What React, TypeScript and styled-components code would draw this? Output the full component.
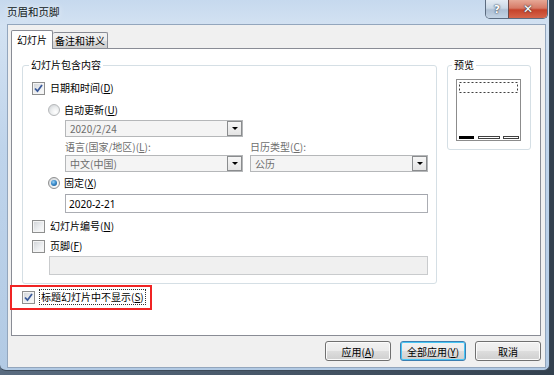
import React from 'react';
import styled, { createGlobalStyle } from 'styled-components';

const GlobalStyle = createGlobalStyle`
  html, body {
    margin: 0;
    padding: 0;
  }
  body {
    width: 554px;
    height: 375px;
    overflow: hidden;
    background: linear-gradient(90deg, #5a6c80 0%, #33414f 100%);
    font-family: "Noto Sans CJK SC", "Noto Sans", sans-serif;
    font-size: 10px;
    color: #000;
  }
`;

const Window = styled.div`
  position: relative;
  box-sizing: border-box;
  width: 550px;
  height: 371px;
  padding: 0 3px 2px 7px;
  display: flex;
  flex-direction: column;
  border-right: 1px solid #3d4a58;
  border-bottom: 1px solid #3d4a58;
  border-radius: 0 0 6px 6px;
  background: linear-gradient(180deg, #c6d9ee 0%, #d3e2f2 7%, #bfd4eb 40%, #b2cae4 100%);
`;

const TitleBar = styled.div`
  height: 24px;
  display: flex;
  align-items: flex-start;
  flex-shrink: 0;
`;

const Title = styled.div`
  padding-top: 4px;
  line-height: 16px;
  font-size: 10.5px;
  color: #101820;
  text-shadow: 0 0 6px rgba(255, 255, 255, 0.9);
`;

const Caption = styled.div`
  margin-left: auto;
  margin-right: -2px;
  display: flex;
  height: 18px;
  border: 1px solid #5c6c80;
  border-top: none;
  border-radius: 0 0 5px 5px;
  overflow: hidden;
`;

const CaptionButton = styled.div<{ $close?: boolean }>`
  width: ${(p) => (p.$close ? 38 : 22)}px;
  display: flex;
  align-items: center;
  justify-content: center;
  font-family: "DejaVu Sans", sans-serif;
  font-weight: bold;
  font-size: ${(p) => (p.$close ? 12 : 11)}px;
  color: #fff;
  text-shadow: 0 0 2px #2c3a4c, 0 0 1px #2c3a4c;
  background: ${(p) =>
    p.$close
      ? 'linear-gradient(180deg, #e6a896 0%, #d67a66 45%, #c5432b 55%, #d6654a 100%)'
      : 'linear-gradient(180deg, #e4ecf4 0%, #cad8e6 45%, #aebfd3 55%, #c3d3e4 100%)'};
  border-left: ${(p) => (p.$close ? '1px solid #6b4a4a' : 'none')};
`;

const Client = styled.div`
  flex: 1;
  display: flex;
  flex-direction: column;
  background: #f0f0f0;
  border: 1px solid #93a6bd;
  padding: 5px 4px 6px 3px;
  min-height: 0;
`;

const TabRow = styled.div`
  height: 18px;
  display: flex;
  align-items: flex-end;
  position: relative;
  z-index: 1;
`;

const Tab = styled.div<{ $active?: boolean }>`
  box-sizing: border-box;
  height: ${(p) => (p.$active ? 19 : 16)}px;
  margin-bottom: ${(p) => (p.$active ? -1 : 0)}px;
  padding: 0 ${(p) => (p.$active ? 5 : 2)}px;
  line-height: ${(p) => (p.$active ? 18 : 15)}px;
  border: 1px solid #898c95;
  border-bottom: none;
  border-left: ${(p) => (p.$active ? '1px solid #898c95' : 'none')};
  border-radius: 2px 2px 0 0;
  background: ${(p) => (p.$active ? '#fff' : 'linear-gradient(180deg, #f2f2f2 0%, #ebebeb 50%, #dddddd 51%, #cfcfcf 100%)')};
`;

const Panel = styled.div`
  flex: 1;
  display: flex;
  gap: 10px;
  align-items: flex-start;
  background: #fff;
  border: 1px solid #898c95;
  padding: 8px 9px 0 10px;
`;

const LeftColumn = styled.div`
  width: 415px;
  display: flex;
  flex-direction: column;
`;

const GroupBox = styled.fieldset<{ $w: number }>`
  box-sizing: border-box;
  width: ${(p) => p.$w}px;
  margin: 0;
  padding: 0 0 8px 0;
  min-width: 0;
  border: 1px solid #d5dfe5;
  border-radius: 3px;
`;

const Legend = styled.legend<{ $ml: number }>`
  margin-left: ${(p) => p.$ml}px;
  padding: 0 2px;
  line-height: 16px;
  font-size: 10px;
  color: #000;
`;

const Rows = styled.div`
  display: flex;
  flex-direction: column;
  padding-left: 9px;
`;

const Row = styled.div<{ $mt?: number; $indent?: number }>`
  display: flex;
  align-items: center;
  height: 16px;
  margin-top: ${(p) => p.$mt || 0}px;
  margin-left: ${(p) => p.$indent || 0}px;
  white-space: nowrap;
`;

const Label = styled.span<{ $disabled?: boolean }>`
  color: ${(p) => (p.$disabled ? '#6d6d6d' : '#000')};
  line-height: 16px;
  white-space: nowrap;
`;

const FocusLabel = styled.span`
  outline: 1px dotted #303030;
  outline-offset: 0;
  padding: 0 1px;
  line-height: 14px;
`;

const CheckBox = styled.span`
  box-sizing: border-box;
  width: 13px;
  height: 13px;
  margin-right: 5px;
  flex-shrink: 0;
  display: flex;
  align-items: center;
  justify-content: center;
  border: 1px solid #8e8f8f;
  background: linear-gradient(135deg, #cfd2d6 0%, #eef0f2 60%, #fbfbfb 100%);
  box-shadow: inset 0 0 0 1px #f4f4f4;
`;

const Radio = styled.span<{ $on?: boolean; $dim?: boolean }>`
  box-sizing: border-box;
  width: 12px;
  height: 12px;
  margin-right: 4px;
  flex-shrink: 0;
  border-radius: 50%;
  display: flex;
  align-items: center;
  justify-content: center;
  border: 1px solid ${(p) => (p.$dim ? '#b6b8ba' : '#8e8f8f')};
  background: radial-gradient(circle at 65% 70%, #ffffff 0%, #eceeef 45%, #c9ccd0 100%);
  &::after {
    content: '';
    display: ${(p) => (p.$on ? 'block' : 'none')};
    width: 6px;
    height: 6px;
    border-radius: 50%;
    background: radial-gradient(circle at 40% 35%, #9dd3f6 0%, #3a8ccc 45%, #1b4e7e 100%);
  }
`;

const Grid = styled.div<{ $mt?: number }>`
  display: grid;
  grid-template-columns: 178px 178px;
  column-gap: 7px;
  margin-left: 33px;
  margin-top: ${(p) => p.$mt || 0}px;
`;

const Combo = styled.div`
  box-sizing: border-box;
  height: 17px;
  display: flex;
  align-items: center;
  border: 1px solid #b5b7b9;
  background: #f4f4f4;
  color: #6d6d6d;
  padding-left: 4px;
  line-height: 15px;
`;

const DropButton = styled.span`
  box-sizing: border-box;
  margin-left: auto;
  width: 15px;
  height: 15px;
  display: flex;
  align-items: center;
  justify-content: center;
  border: 1px solid #8a8c8e;
  background: linear-gradient(180deg, #f6f6f6 0%, #e4e4e4 100%);
  &::after {
    content: '';
    border-left: 3px solid transparent;
    border-right: 3px solid transparent;
    border-top: 3px solid #000;
  }
`;

const TextInput = styled.div<{ $w: number; $h: number; $mt?: number; $indent: number; $disabled?: boolean }>`
  box-sizing: border-box;
  width: ${(p) => p.$w}px;
  height: ${(p) => p.$h}px;
  margin-top: ${(p) => p.$mt || 0}px;
  margin-left: ${(p) => p.$indent}px;
  padding-left: 3px;
  display: flex;
  align-items: center;
  border: 1px solid ${(p) => (p.$disabled ? '#c9cbcd' : '#abadb3')};
  border-top-color: ${(p) => (p.$disabled ? '#c9cbcd' : '#a3a6ad')};
  background: ${(p) => (p.$disabled ? '#f0f0f0' : '#fff')};
  font-family: "Noto Sans", "Noto Sans CJK SC", sans-serif;
`;

const PreviewBox = styled.div`
  margin: 6px 0 0 8px;
  width: 65px;
  height: 62px;
  display: flex;
`;

const ButtonRow = styled.div`
  margin-top: 5px;
  display: flex;
  justify-content: flex-end;
  gap: 9px;
`;

const Button = styled.div<{ $default?: boolean }>`
  box-sizing: border-box;
  width: 66px;
  height: 20px;
  display: flex;
  align-items: center;
  justify-content: center;
  border: 1px solid ${(p) => (p.$default ? '#3c7fb1' : '#707070')};
  border-radius: 3px;
  background: linear-gradient(180deg, #f2f2f2 0%, #ebebeb 48%, #dddddd 52%, #cfcfcf 100%);
  box-shadow: ${(p) => (p.$default ? 'inset 0 0 0 1px #48c6f5' : 'inset 0 0 0 1px #fbfbfb')};
`;

const Annotation = styled.div`
  position: absolute;
  left: 10px;
  top: 285px;
  width: 142px;
  height: 25px;
  box-sizing: border-box;
  border: 2px solid #f02424;
  pointer-events: none;
`;

const Mark = () => (
  <svg width="9" height="9" viewBox="0 0 9 9">
    <path d="M1 4.5 L3.5 7.2 L8 1" fill="none" stroke="#3a5a9a" strokeWidth="1.8" />
  </svg>
);

const Key = ({ k }: { k: string }) => (
  <>
    (<u>{k}</u>)
  </>
);

const Preview = () => (
  <svg width="65" height="62" viewBox="0 0 65 62">
    <rect x="0.5" y="0.5" width="64" height="61" fill="#fff" stroke="#8c8c8c" />
    <rect x="3.5" y="3.5" width="58" height="10" fill="none" stroke="#404040" strokeDasharray="2 2" />
    <rect x="3" y="57" width="15" height="3" fill="#000" />
    <rect x="22.5" y="57.5" width="21" height="2" fill="#fff" stroke="#404040" />
    <rect x="47.5" y="57.5" width="15" height="2" fill="#fff" stroke="#404040" />
  </svg>
);

export default function App() {
  return (
    <>
      <GlobalStyle />
      <Window>
        <TitleBar>
          <Title>页眉和页脚</Title>
          <Caption>
            <CaptionButton>?</CaptionButton>
            <CaptionButton $close>✕</CaptionButton>
          </Caption>
        </TitleBar>
        <Client>
          <TabRow>
            <Tab $active>幻灯片</Tab>
            <Tab>备注和讲义</Tab>
          </TabRow>
          <Panel>
            <LeftColumn>
              <GroupBox $w={415}>
                <Legend $ml={6}>幻灯片包含内容</Legend>
                <Rows>
                  <Row $mt={7}>
                    <CheckBox>
                      <Mark />
                    </CheckBox>
                    <Label>
                      日期和时间<Key k="D" />
                    </Label>
                  </Row>
                  <Row $mt={6} $indent={16}>
                    <Radio $dim />
                    <Label>
                      自动更新<Key k="U" />
                    </Label>
                  </Row>
                  <Grid $mt={2}>
                    <Combo>
                      2020/2/24
                      <DropButton />
                    </Combo>
                    <span />
                  </Grid>
                  <Grid $mt={2}>
                    <Label $disabled>
                      语言(国家/地区)<Key k="L" />:
                    </Label>
                    <Label $disabled>
                      日历类型<Key k="C" />:
                    </Label>
                    <Combo>
                      中文(中国)
                      <DropButton />
                    </Combo>
                    <Combo>
                      公历
                      <DropButton />
                    </Combo>
                  </Grid>
                  <Row $mt={3} $indent={16}>
                    <Radio $on />
                    <Label>
                      固定<Key k="X" />
                    </Label>
                  </Row>
                  <TextInput $w={363} $h={19} $mt={3} $indent={33}>
                    2020-2-21
                  </TextInput>
                  <Row $mt={5}>
                    <CheckBox />
                    <Label>
                      幻灯片编号<Key k="N" />
                    </Label>
                  </Row>
                  <Row $mt={4}>
                    <CheckBox />
                    <Label>
                      页脚<Key k="F" />
                    </Label>
                  </Row>
                  <TextInput $w={379} $h={19} $mt={2} $indent={17} $disabled />
                </Rows>
              </GroupBox>
              <Row $mt={5}>
                <CheckBox>
                  <Mark />
                </CheckBox>
                <FocusLabel>
                  标题幻灯片中不显示<Key k="S" />
                </FocusLabel>
              </Row>
            </LeftColumn>
            <GroupBox $w={84}>
              <Legend $ml={4}>预览</Legend>
              <PreviewBox>
                <Preview />
              </PreviewBox>
            </GroupBox>
          </Panel>
          <ButtonRow>
            <Button>
              应用<Key k="A" />
            </Button>
            <Button $default>
              全部应用<Key k="Y" />
            </Button>
            <Button>取消</Button>
          </ButtonRow>
        </Client>
        <Annotation />
      </Window>
    </>
  );
}
